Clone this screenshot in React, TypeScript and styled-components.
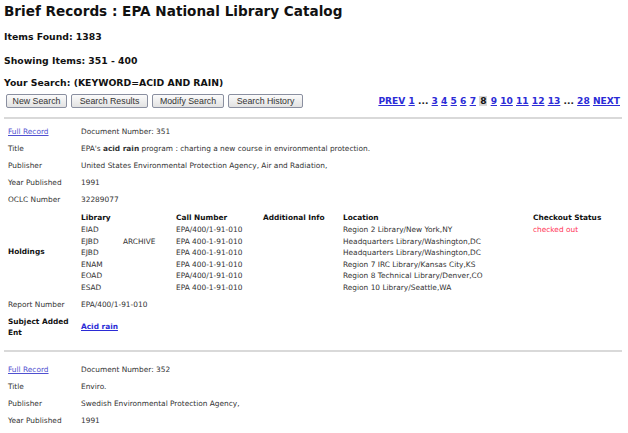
import React from "react";
import styled, { createGlobalStyle } from "styled-components";

const GlobalStyle = createGlobalStyle`
  body {
    margin: 0;
    background: #ffffff;
    font-family: "DejaVu Sans", Verdana, sans-serif;
    color: #222222;
  }
`;

const Page = styled.div`
  width: 628px;
  height: 433px;
  overflow: hidden;
  padding: 0 6px 0 4px;
  box-sizing: border-box;
`;

const Heading = styled.h1`
  margin: 0;
  padding-top: 2px;
  font-size: 13.6px;
  line-height: 18px;
  font-weight: bold;
  color: #111111;
`;

const SubHeading = styled.div<{ gap: number }>`
  margin-top: ${(p) => p.gap}px;
  font-size: 9.3px;
  line-height: 13px;
  font-weight: bold;
  color: #111111;
`;

const Toolbar = styled.div`
  display: flex;
  align-items: center;
  justify-content: space-between;
  margin-top: 5px;
  padding: 0 2px;
`;

const ButtonGroup = styled.div`
  display: flex;
  gap: 4px;
`;

const Button = styled.button<{ w: number }>`
  width: ${(p) => p.w}px;
  height: 14px;
  padding: 0;
  font-family: "Liberation Sans", Arial, sans-serif;
  font-size: 8.8px;
  line-height: 12px;
  color: #333333;
  background: linear-gradient(#fbfbfb, #e2e2e2);
  border: 1px solid #8a8fa0;
  border-radius: 2px;
`;

const Pager = styled.div`
  display: flex;
  align-items: center;
  gap: 3.2px;
  font-size: 9.1px;
  font-weight: bold;
  color: #222222;
`;

const PagerLink = styled.a`
  color: #2b2bd6;
  text-decoration: underline;
`;

const Current = styled.span`
  background: #d8d8d8;
  color: #111111;
  padding: 0 1px;
`;

const Rule = styled.hr`
  margin: 9px 0 0 0;
  border: 0;
  border-top: 2px solid #d9d9d9;
`;

const Record = styled.div<{ top: number }>`
  display: grid;
  grid-template-columns: 73px 1fr;
  padding: ${(p) => p.top}px 0 0 4px;
  font-size: 7.4px;
`;

const Label = styled.div<{ bold?: boolean }>`
  line-height: 17px;
  font-weight: ${(p) => (p.bold ? "bold" : "normal")};
  color: ${(p) => (p.bold ? "#111111" : "#333333")};
  display: flex;
  align-items: center;
`;

const Stacked = styled.div`
  font-weight: bold;
  color: #111111;
  line-height: 11px;
  padding: 3px 0;
`;

const Value = styled.div`
  line-height: 17px;
  color: #333333;
  display: flex;
  align-items: center;
`;

const RecordLink = styled.a`
  color: #5050d0;
  text-decoration: underline;
`;

const SubjectLink = styled.a`
  color: #2b2bd6;
  font-weight: bold;
  text-decoration: underline;
`;

const Holdings = styled.div`
  display: grid;
  grid-template-columns: 42px 53px 87px 80px 190px 1fr;
  padding: 3px 0 2px;
  line-height: 11.6px;
  color: #333333;
`;

const Th = styled.div`
  font-weight: bold;
  color: #111111;
  line-height: 13px;
`;

const Status = styled.div`
  color: #ff3355;
`;

const pages = ["3", "4", "5", "6", "7"];
const pagesAfter = ["9", "10", "11", "12", "13"];

const holdings = [
  ["EIAD", "", "EPA/400/1-91-010", "Region 2 Library/New York,NY", "checked out"],
  ["EJBD", "ARCHIVE", "EPA 400-1-91-010", "Headquarters Library/Washington,DC", ""],
  ["EJBD", "", "EPA 400-1-91-010", "Headquarters Library/Washington,DC", ""],
  ["ENAM", "", "EPA 400-1-91-010", "Region 7 IRC Library/Kansas City,KS", ""],
  ["EOAD", "", "EPA/400/1-91-010", "Region 8 Technical Library/Denver,CO", ""],
  ["ESAD", "", "EPA 400-1-91-010", "Region 10 Library/Seattle,WA", ""],
];

const App = (): JSX.Element => {
  return (
    <Page>
      <GlobalStyle />
      <Heading>Brief Records : EPA National Library Catalog</Heading>
      <SubHeading gap={10}>Items Found: 1383</SubHeading>
      <SubHeading gap={11}>Showing Items: 351 - 400</SubHeading>
      <SubHeading gap={9}>Your Search: (KEYWORD=ACID AND RAIN)</SubHeading>
      <Toolbar>
        <ButtonGroup>
          <Button w={61}>New Search</Button>
          <Button w={77}>Search Results</Button>
          <Button w={72}>Modify Search</Button>
          <Button w={75}>Search History</Button>
        </ButtonGroup>
        <Pager>
          <PagerLink>PREV</PagerLink>
          <PagerLink>1</PagerLink>
          <span>...</span>
          {pages.map((p) => (
            <PagerLink key={p}>{p}</PagerLink>
          ))}
          <Current>8</Current>
          {pagesAfter.map((p) => (
            <PagerLink key={p}>{p}</PagerLink>
          ))}
          <span>...</span>
          <PagerLink>28</PagerLink>
          <PagerLink>NEXT</PagerLink>
        </Pager>
      </Toolbar>
      <Rule />
      <Record top={4}>
        <Label>
          <RecordLink>Full Record</RecordLink>
        </Label>
        <Value>Document Number: 351</Value>
        <Label>Title</Label>
        <Value>
          <span>
            EPA's <b>acid rain</b> program : charting a new course in environmental protection.
          </span>
        </Value>
        <Label>Publisher</Label>
        <Value>United States Environmental Protection Agency, Air and Radiation,</Value>
        <Label>Year Published</Label>
        <Value>1991</Value>
        <Label>OCLC Number</Label>
        <Value>32289077</Value>
        <Label bold>Holdings</Label>
        <Holdings>
          <Th>Library</Th>
          <Th></Th>
          <Th>Call Number</Th>
          <Th>Additional Info</Th>
          <Th>Location</Th>
          <Th>Checkout Status</Th>
          {holdings.map((h, i) => (
            <React.Fragment key={i}>
              <div>{h[0]}</div>
              <div>{h[1]}</div>
              <div>{h[2]}</div>
              <div></div>
              <div>{h[3]}</div>
              <Status>{h[4]}</Status>
            </React.Fragment>
          ))}
        </Holdings>
        <Label>Report Number</Label>
        <Value>EPA/400/1-91-010</Value>
        <Stacked>
          Subject Added
          <br />
          Ent
        </Stacked>
        <Value>
          <SubjectLink>Acid rain</SubjectLink>
        </Value>
      </Record>
      <Rule />
      <Record top={9}>
        <Label>
          <RecordLink>Full Record</RecordLink>
        </Label>
        <Value>Document Number: 352</Value>
        <Label>Title</Label>
        <Value>Enviro.</Value>
        <Label>Publisher</Label>
        <Value>Swedish Environmental Protection Agency,</Value>
        <Label>Year Published</Label>
        <Value>1991</Value>
      </Record>
    </Page>
  );
};

export default App;
